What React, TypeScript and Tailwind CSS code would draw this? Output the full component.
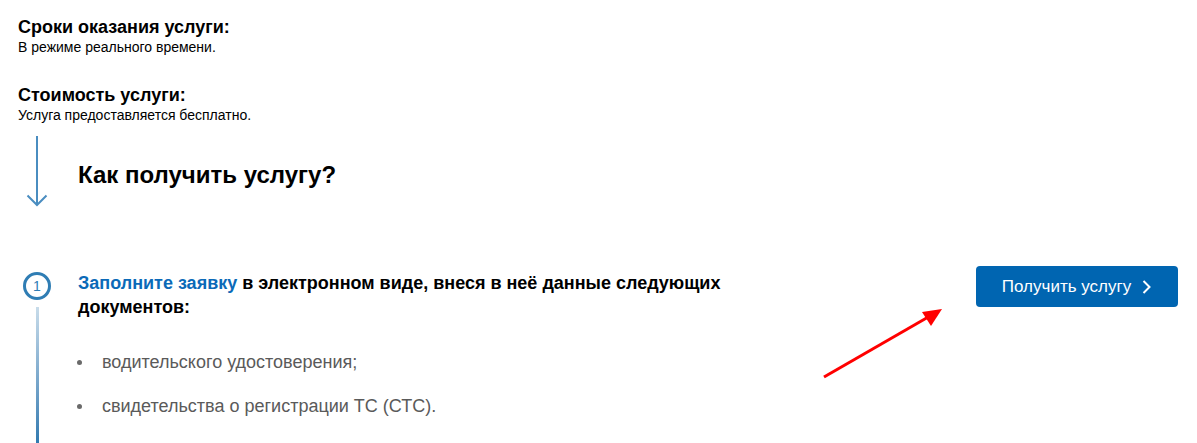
import React from 'react';

const docs = ['водительского удостоверения;', 'свидетельства о регистрации ТС (СТС).'];

function InfoBlock({ title, text }: { title: string; text: string }) {
  return (
    <div>
      <h3 className="text-[18px] font-bold leading-[20px] text-black">{title}</h3>
      <p className="text-[14px] leading-[20px] text-black">{text}</p>
    </div>
  );
}

export default function App() {
  return (
    <div className="relative w-[1197px] h-[443px] overflow-hidden bg-white font-['Liberation_Sans',Arial,sans-serif]">
      {/* Info */}
      <div className="flex flex-col gap-[28px] pl-[18px] pt-[17px]">
        <InfoBlock title="Сроки оказания услуги:" text="В режиме реального времени." />
        <InfoBlock title="Стоимость услуги:" text="Услуга предоставляется бесплатно." />
      </div>

      {/* How to */}
      <div className="flex mt-[11px]">
        <div className="w-[78px] flex justify-center shrink-0 pr-[4px]">
          <svg width="22" height="72" viewBox="0 0 22 72" fill="none">
            <line x1="11" y1="0" x2="11" y2="69" stroke="#4a8dc0" strokeWidth="2" />
            <polyline points="1.5,59.5 11,69 20.5,59.5" stroke="#4a8dc0" strokeWidth="2" fill="none" />
          </svg>
        </div>
        <h2 className="pt-[25px] text-[24px] font-bold leading-[28px] text-black">Как получить услугу?</h2>
      </div>

      {/* Step 1 */}
      <div className="flex mt-[63px]">
        <div className="w-[78px] shrink-0 flex flex-col items-center pr-[4px]">
          <div className="mt-[1px] w-[28px] h-[28px] rounded-full border-[3px] border-[#2f7db4] flex items-center justify-center text-[14px] text-[#2f7db4] leading-none">
            1
          </div>
          <div className="w-[3px] h-[140px] mt-[7px] bg-gradient-to-b from-[#c8dcea] to-[#2b77ae]" />
        </div>
        <div className="flex-1 flex justify-between pr-[19px]">
          <div>
            <p className="w-[680px] text-[18px] font-bold leading-[24px] text-black">
              <span className="text-[#0b6ab8]">Заполните заявку</span> в электронном виде, внеся в неё данные следующих документов:
            </p>
            <ul className="mt-[31px] flex flex-col gap-[20px]">
              {docs.map(d => (
                <li key={d} className="flex items-center text-[18px] leading-[24px] text-[#5a5a5a]">
                  <span className="w-[5px] h-[5px] rounded-full bg-[#6a6a6a] ml-[-1px] mr-[20px]" />
                  {d}
                </li>
              ))}
            </ul>
          </div>
          <button className="mt-[-5px] w-[202px] h-[41px] rounded-[4px] bg-[#0065b1] text-white text-[17px] flex items-center justify-center gap-[11px]">
            Получить услугу
            <svg width="10" height="14" viewBox="0 0 10 14" fill="none">
              <polyline points="1.5,1 7.5,7 1.5,13" stroke="white" strokeWidth="2" fill="none" />
            </svg>
          </button>
        </div>
      </div>

      {/* Annotation arrow */}
      <svg className="absolute left-0 top-0 pointer-events-none" width="1197" height="443">
        <line x1="824" y1="377" x2="930" y2="316" stroke="#ff0000" strokeWidth="3" />
        <polygon points="942,309 922,312 931,326" fill="#ff0000" />
      </svg>
    </div>
  );
}
